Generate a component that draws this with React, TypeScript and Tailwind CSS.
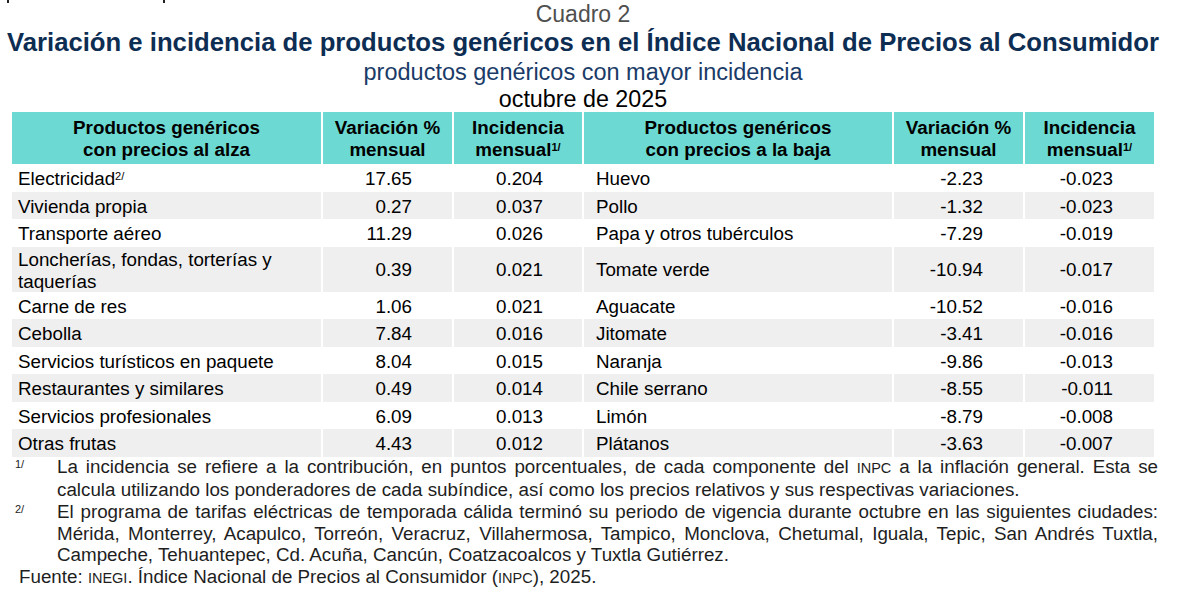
import React from "react";

type Row = { a: string; aSup?: string; av: string; ai: string; b: string; bv: string; bi: string; tall?: boolean };

const rows: Row[] = [
  { a: "Electricidad", aSup: "2/", av: "17.65", ai: "0.204", b: "Huevo", bv: "-2.23", bi: "-0.023" },
  { a: "Vivienda propia", av: "0.27", ai: "0.037", b: "Pollo", bv: "-1.32", bi: "-0.023" },
  { a: "Transporte aéreo", av: "11.29", ai: "0.026", b: "Papa y otros tubérculos", bv: "-7.29", bi: "-0.019" },
  { a: "Loncherías, fondas, torterías y taquerías", av: "0.39", ai: "0.021", b: "Tomate verde", bv: "-10.94", bi: "-0.017", tall: true },
  { a: "Carne de res", av: "1.06", ai: "0.021", b: "Aguacate", bv: "-10.52", bi: "-0.016" },
  { a: "Cebolla", av: "7.84", ai: "0.016", b: "Jitomate", bv: "-3.41", bi: "-0.016" },
  { a: "Servicios turísticos en paquete", av: "8.04", ai: "0.015", b: "Naranja", bv: "-9.86", bi: "-0.013" },
  { a: "Restaurantes y similares", av: "0.49", ai: "0.014", b: "Chile serrano", bv: "-8.55", bi: "-0.011" },
  { a: "Servicios profesionales", av: "6.09", ai: "0.013", b: "Limón", bv: "-8.79", bi: "-0.008" },
  { a: "Otras frutas", av: "4.43", ai: "0.012", b: "Plátanos", bv: "-3.63", bi: "-0.007" },
];

function Head({ l1, l2, sup }: { l1: string; l2: string; sup?: boolean }) {
  return (
    <div className="bg-[#6cdad2] h-[52px] pt-[2px] flex flex-col items-center justify-center font-bold text-black leading-[22px]">
      <div>{l1}</div>
      <div>
        {l2}
        {sup && <sup className="text-[11px]">1/</sup>}
      </div>
    </div>
  );
}

export default function App() {
  return (
    <div
      className="relative w-[1182px] h-[593px] bg-white text-black text-[18.8px]"
      style={{ fontFamily: '"Liberation Sans", Arial, sans-serif' }}
    >
      <div className="absolute left-[7px] top-0 w-[2px] h-[3px] bg-[#222]" />
      <div className="absolute left-[163px] top-0 w-[2px] h-[3px] bg-[#222]" />

      <div className="pt-[1px] ml-[12px] w-[1142px] flex flex-col items-center">
        <div className="text-[23px] leading-[26px] text-[#4f4f4f]">Cuadro 2</div>
        <div className="text-[25.7px] leading-[31px] font-bold text-[#0d2d53] whitespace-nowrap">
          Variación e incidencia de productos genéricos en el Índice Nacional de Precios al Consumidor
        </div>
        <div className="text-[23.5px] leading-[28px] text-[#1a3b68]">productos genéricos con mayor incidencia</div>
        <div className="text-[23.3px] leading-[26px] text-black">octubre de 2025</div>
      </div>

      <div className="ml-[12px] grid grid-cols-[309px_129px_128px_308px_129px_129px] gap-x-[2px]">
        <Head l1="Productos genéricos" l2="con precios al alza" />
        <Head l1="Variación %" l2="mensual" />
        <Head l1="Incidencia" l2="mensual" sup />
        <Head l1="Productos genéricos" l2="con precios a la baja" />
        <Head l1="Variación %" l2="mensual" />
        <Head l1="Incidencia" l2="mensual" sup />

        {rows.map((r, i) => {
          const bg = i % 2 === 1 ? "bg-[#efefef]" : "bg-white";
          const h = r.tall ? "h-[45px]" : "h-[27.5px]";
          return (
            <React.Fragment key={i}>
              <div className={`${bg} ${h} flex items-center pt-[3px] pl-[6px] pr-[6px] leading-[22px]`}>
                <span>
                  {r.a}
                  {r.aSup && <sup className="text-[11px]">{r.aSup}</sup>}
                </span>
              </div>
              <div className={`${bg} ${h} flex items-center justify-end pt-[3px] pr-[40px]`}>{r.av}</div>
              <div className={`${bg} ${h} flex items-center justify-end pt-[3px] pr-[39px]`}>{r.ai}</div>
              <div className={`${bg} ${h} flex items-center pt-[3px] pl-[12px]`}>{r.b}</div>
              <div className={`${bg} ${h} flex items-center justify-end pt-[3px] pr-[40px]`}>{r.bv}</div>
              <div className={`${bg} ${h} flex items-center justify-end pt-[3px] pr-[41px]`}>{r.bi}</div>
            </React.Fragment>
          );
        })}
      </div>

      <div className="text-[#1e1e1e] leading-[21.7px] mt-[-1px]">
        <div className="flex">
          <div className="w-[57px] pl-[15px] text-[11px] leading-[16px] shrink-0">1/</div>
          <div className="w-[1101px] text-justify">
            La incidencia se refiere a la contribución, en puntos porcentuales, de cada componente del{" "}
            <span className="text-[14.5px]">INPC</span> a la inflación general. Esta se calcula utilizando los
            ponderadores de cada subíndice, así como los precios relativos y sus respectivas variaciones.
          </div>
        </div>
        <div className="flex">
          <div className="w-[57px] pl-[15px] text-[11px] leading-[16px] shrink-0">2/</div>
          <div className="w-[1101px] text-justify">
            El programa de tarifas eléctricas de temporada cálida terminó su periodo de vigencia durante octubre en
            las siguientes ciudades: Mérida, Monterrey, Acapulco, Torreón, Veracruz, Villahermosa, Tampico, Monclova,
            Chetumal, Iguala, Tepic, San Andrés Tuxtla, Campeche, Tehuantepec, Cd. Acuña, Cancún, Coatzacoalcos y
            Tuxtla Gutiérrez.
          </div>
        </div>
        <div className="pl-[19px]">
          Fuente: <span className="text-[14.5px]">INEGI</span>. Índice Nacional de Precios al Consumidor (
          <span className="text-[14.5px]">INPC</span>), 2025.
        </div>
      </div>
    </div>
  );
}
